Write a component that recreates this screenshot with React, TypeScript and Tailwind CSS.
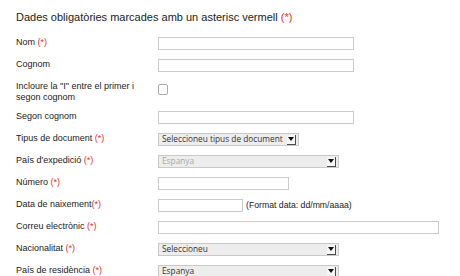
import React from "react";

const Req = () => <span className="text-[#e3302f]">(*)</span>;

function Arrow() {
  return (
    <div className="mr-[2px] flex h-[10px] w-[9px] shrink-0 items-center justify-center border-b border-r border-b-[#4a4a4a] border-r-[#4a4a4a] bg-[#f6f6f6]">
      <svg width="6" height="4" viewBox="0 0 6 4">
        <polygon points="0,0 6,0 3,4" fill="#111" />
      </svg>
    </div>
  );
}

function Select({ w, text, muted }: { w: string; text: string; muted?: boolean }) {
  return (
    <div
      className={`flex h-[13px] items-center justify-between border border-[#c9c9c9] bg-[#ededed] pl-[3px] ${w}`}
    >
      <span
        className={`whitespace-nowrap text-[8.3px] leading-none ${muted ? "text-[#a8a8a8]" : "text-[#333]"}`}
        style={{ fontFamily: '"Open Sans", "DejaVu Sans", sans-serif' }}
      >
        {text}
      </span>
      <Arrow />
    </div>
  );
}

function Input({ w }: { w: string }) {
  return <div className={`h-[13px] border border-[#cacaca] bg-white ${w}`} />;
}

function Row({ label, children }: { label: React.ReactNode; children: React.ReactNode }) {
  return (
    <div className="grid grid-cols-[142px_1fr] items-start">
      <div className="w-[130px] text-[9px] leading-[10.5px] text-[#222]">{label}</div>
      <div className="flex items-center">{children}</div>
    </div>
  );
}

export default function App() {
  return (
    <div
      className="h-[276px] w-[460px] overflow-hidden bg-white pl-[16px] pt-[10px]"
      style={{ fontFamily: '"Liberation Sans", Arial, sans-serif' }}
    >
      <div className="text-[11px] leading-[14px] text-[#222]">
        Dades obligatòries marcades amb un asterisc vermell <Req />
      </div>
      <div className="mt-[13px] flex flex-col gap-[9px]">
        <Row label={<>Nom <Req /></>}>
          <Input w="w-[196px]" />
        </Row>
        <Row label="Cognom">
          <Input w="w-[196px]" />
        </Row>
        <Row label={<>Incloure la "I" entre el primer i segon cognom</>}>
          <div className="mt-[3px] h-[11px] w-[10px] rounded-[2px] border border-[#a9a9a9] bg-white" />
        </Row>
        <Row label="Segon cognom">
          <Input w="w-[196px]" />
        </Row>
        <Row label={<>Tipus de document <Req /></>}>
          <Select w="w-[141px]" text="Seleccioneu tipus de document" />
        </Row>
        <Row label={<>País d'expedició <Req /></>}>
          <Select w="w-[181px]" text="Espanya" muted />
        </Row>
        <Row label={<>Número <Req /></>}>
          <Input w="w-[131px]" />
        </Row>
        <Row label={<>Data de naixement<Req /></>}>
          <Input w="w-[85px]" />
          <span className="ml-[3px] text-[8.7px] leading-none text-[#222]">(Format data: dd/mm/aaaa)</span>
        </Row>
        <Row label={<>Correu electrònic <Req /></>}>
          <Input w="w-[281px]" />
        </Row>
        <Row label={<>Nacionalitat <Req /></>}>
          <Select w="w-[181px]" text="Seleccioneu" />
        </Row>
        <Row label={<>País de residència <Req /></>}>
          <Select w="w-[181px]" text="Espanya" />
        </Row>
      </div>
    </div>
  );
}
